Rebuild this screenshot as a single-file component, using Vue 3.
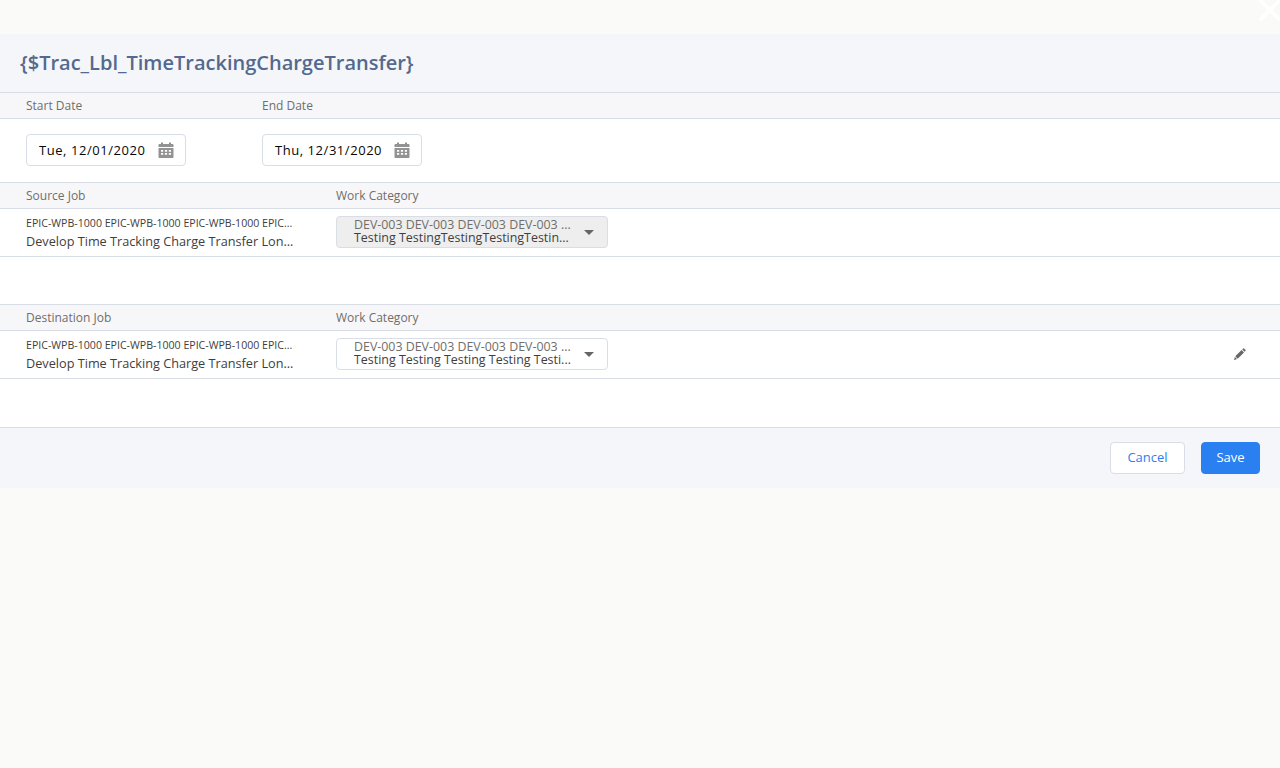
<template>
  <div class="page">
    <button class="close-btn" aria-label="Close">
      <svg viewBox="0 0 24 24" width="24" height="24">
        <path d="M3 1 L23 21 M23 1 L3 21" stroke="#fff" stroke-width="3.6" fill="none" />
      </svg>
    </button>

    <div class="modal">
      <header class="modal-header">
        <h1 class="title">{$Trac_Lbl_TimeTrackingChargeTransfer}</h1>
      </header>

      <div class="head-row">
        <span class="date-col">Start Date</span>
        <span>End Date</span>
      </div>
      <div class="date-row">
        <div v-for="d in dates" :key="d" class="date-input">
          <span class="date-text">{{ d }}</span>
          <svg class="cal" viewBox="0 0 16 16" width="16" height="16">
            <path fill="#939393" d="M3 0.5h2v1.5h6V0.5h2V2h1.4c.6 0 1.1.5 1.1 1.1V5H.5V3.1C.5 2.5 1 2 1.6 2H3z" />
            <path fill="#939393" fill-rule="evenodd" d="M.5 6h15v8.900c0 .6-.5 1.100-1.100 1.100H1.600C1 16 .5 15.500.5 14.900zM3 8v1.700h2.200V8zm3.900 0v1.700h2.200V8zm3.900 0v1.700H13V8zM3 11v1.700h2.200V11zm3.900 0v1.700h2.200V11zm3.900 0v1.700H13V11z" />
          </svg>
        </div>
      </div>

      <template v-for="s in sections" :key="s.label">
        <div class="head-row">
          <span class="job-col">{{ s.label }}</span>
          <span>Work Category</span>
        </div>
        <div class="job-row">
          <div class="job-col">
            <div class="job-code">EPIC-WPB-1000 EPIC-WPB-1000 EPIC-WPB-1000 EPIC...</div>
            <div class="job-name">Develop Time Tracking Charge Transfer Lon...</div>
          </div>
          <div class="combo" :class="{ disabled: s.disabled }">
            <div class="combo-text">
              <div class="combo-code">DEV-003 DEV-003 DEV-003 DEV-003 ...</div>
              <div class="combo-name">{{ s.category }}</div>
            </div>
            <span class="caret"></span>
          </div>
          <svg v-if="s.editable" class="pencil" viewBox="0 0 12 12" width="12" height="12">
            <path fill="#666" d="M9.200.4c.2-.2.500-.2.700 0l1.700 1.700c.2.200.2.500 0 .7l-1 1L8.200 1.400zM7.600 2l2.400 2.400-6.300 6.300-2.400-2.400zM.9 9 3 11.100l-2.500.8c-.2 0-.4-.2-.4-.4z" />
          </svg>
        </div>
        <div class="spacer"></div>
      </template>

      <footer class="modal-footer">
        <button class="btn neutral">Cancel</button>
        <button class="btn brand">Save</button>
      </footer>
    </div>
  </div>
</template>

<script setup>
const dates = ['Tue, 12/01/2020', 'Thu, 12/31/2020']

const sections = [
  { label: 'Source Job', category: 'Testing TestingTestingTestingTestin...', disabled: true, editable: false },
  { label: 'Destination Job', category: 'Testing Testing Testing Testing Testi...', disabled: false, editable: true }
]
</script>

<style>
html,
body {
  background: #fafaf9;
}
</style>

<style scoped>
.page {
  background: #fafaf9;
  box-sizing: border-box;
  color: #3e3e3c;
  font-family: "Open Sans", "Noto Sans", sans-serif;
  height: 768px;
  overflow: hidden;
  padding-top: 34px;
  position: relative;
}

.close-btn {
  background: none;
  border: none;
  height: 24px;
  padding: 0;
  position: absolute;
  right: -1px;
  top: -1px;
  width: 24px;
}

.modal {
  background: #fff;
}

.modal-header {
  background: #f4f6f9;
  border-bottom: 1px solid #d8dde6;
  box-sizing: border-box;
  height: 59px;
  padding: 15px 20px 0;
}

.title {
  color: #54698d;
  font-size: 20px;
  font-weight: 600;
  line-height: 27px;
  margin: 0;
}

.head-row {
  background: #f7f7f9;
  border-bottom: 1px solid #d8dde6;
  box-sizing: border-box;
  color: #706e6b;
  display: flex;
  font-size: 12px;
  height: 26px;
  line-height: 25px;
  padding-left: 26px;
}

.date-col {
  width: 236px;
}

.date-row {
  border-bottom: 1px solid #d8dde6;
  box-sizing: border-box;
  display: flex;
  gap: 76px;
  height: 64px;
  padding: 15px 26px 0;
}

.date-input {
  align-items: center;
  background: #fff;
  border: 1px solid #d8dde6;
  border-radius: 4px;
  box-sizing: border-box;
  display: flex;
  height: 32px;
  justify-content: space-between;
  padding: 0 11px 0 12px;
  width: 160px;
}

.date-text {
  color: #080707;
  font-size: 13px;
  letter-spacing: 0.55px;
  white-space: nowrap;
}

.job-col {
  width: 310px;
}

.job-row {
  border-bottom: 1px solid #d8dde6;
  box-sizing: border-box;
  display: flex;
  height: 48px;
  padding: 7px 0 0 26px;
  position: relative;
}

.job-code {
  font-size: 10.6px;
  line-height: 14px;
  white-space: nowrap;
}

.job-name {
  font-size: 12.7px;
  line-height: 19px;
  margin-top: 2px;
  white-space: nowrap;
}

.combo {
  align-items: center;
  background: #fff;
  border: 1px solid #d8dde6;
  border-radius: 4px;
  box-sizing: border-box;
  display: flex;
  height: 32px;
  justify-content: space-between;
  padding: 0 13px 0 17px;
  width: 272px;
}

.combo.disabled {
  background: #eeeeee;
}

.combo-text {
  padding-bottom: 3px;
}

.combo-code {
  color: #706e6b;
  font-size: 12.4px;
  line-height: 13px;
  white-space: nowrap;
}

.combo-name {
  font-size: 12.45px;
  line-height: 13px;
  white-space: nowrap;
}

.caret {
  border-left: 5px solid transparent;
  border-right: 5px solid transparent;
  border-top: 5px solid #666;
  height: 0;
  width: 0;
}

.pencil {
  position: absolute;
  right: 34px;
  top: 17px;
}

.spacer {
  border-bottom: 1px solid #d8dde6;
  box-sizing: border-box;
  height: 48px;
}

.spacer:nth-last-child(2) {
  height: 49px;
}

.modal-footer {
  align-items: center;
  background: #f4f6f9;
  box-sizing: border-box;
  display: flex;
  gap: 16px;
  height: 60px;
  justify-content: flex-end;
  padding: 0 20px;
}

.btn {
  border-radius: 4px;
  box-sizing: border-box;
  font-family: inherit;
  font-size: 13px;
  height: 32px;
  padding: 0 0 2px;
}

.neutral {
  background: #fff;
  border: 1px solid #d8dde6;
  color: #2f80ed;
  width: 75px;
}

.brand {
  background: #2a80f0;
  border: 1px solid #2a80f0;
  color: #fff;
  width: 59px;
}
</style>
